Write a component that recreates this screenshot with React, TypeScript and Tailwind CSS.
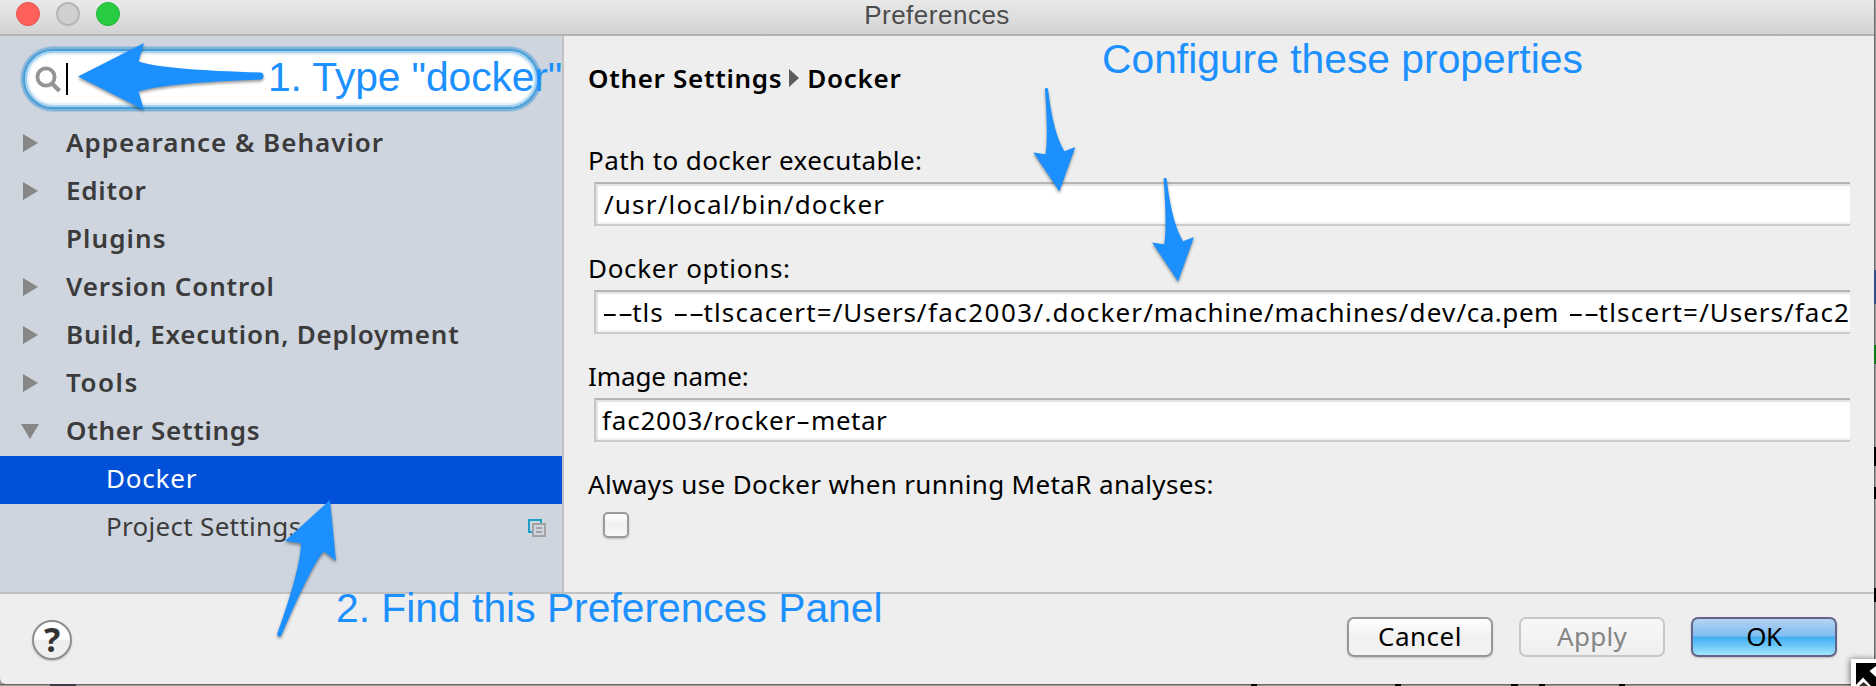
import React from "react";

const treeItems = [
  { label: "Appearance & Behavior", arrow: "right", track: "tracking-[1px]" },
  { label: "Editor", arrow: "right", track: "tracking-[0.75px]" },
  { label: "Plugins", arrow: "none", track: "tracking-[1.1px]" },
  { label: "Version Control", arrow: "right", track: "tracking-[0.86px]" },
  { label: "Build, Execution, Deployment", arrow: "right", track: "tracking-[0.78px]" },
  { label: "Tools", arrow: "right", track: "tracking-[1.5px]" },
  { label: "Other Settings", arrow: "down", track: "tracking-[0.7px]" },
];

function Disclosure({ kind }: { kind: string }) {
  return (
    <svg className="mb-0.5 h-6 w-[46px] shrink-0" viewBox="0 0 46 24" fill="#868686">
      {kind === "right" && <path d="M3 3 L18 12 L3 21 Z" />}
      {kind === "down" && <path d="M1 5 H19 L10 20 Z" />}
    </svg>
  );
}

function Sidebar() {
  return (
    <aside className="w-[564px] shrink-0 border-r-2 border-[#c1c1c1] bg-[#ced5de] text-[#3b3b3b]">
      <div className="flex h-[84px] items-start pl-[23px] pt-[13px]">
        <div className="flex h-[60px] w-[516px] items-center rounded-full border-2 border-[#479fda] bg-white pl-2.5 shadow-[0_0_0_2px_#80b2d9,0_0_0_3px_#a9c5dd,inset_0_0_0_2px_#a5d0ee,inset_0_0_1px_4px_#e4f1fa]">
          <svg className="h-7 w-7" viewBox="0 0 28 28" fill="none" stroke="#949494">
            <circle cx="11" cy="12" r="8.6" strokeWidth="3.8" />
            <path d="M17 18.5 L24.5 26" strokeWidth="4.4" />
          </svg>
          <span className="ml-[3px] h-8 w-0.5 bg-black" />
        </div>
      </div>
      {treeItems.map((item) => (
        <div key={item.label} className="flex h-12 items-center pl-5">
          <Disclosure kind={item.arrow} />
          <span className={`pb-1 font-semibold ${item.track}`}>{item.label}</span>
        </div>
      ))}
      <div className="flex h-12 items-center bg-[#0350d8] pb-1 pl-[106px] tracking-[0.8px] text-white">
        Docker
      </div>
      <div className="flex h-12 items-center justify-between pl-[106px] pr-4">
        <span className="pb-1 tracking-[0.3px]">Project Settings</span>
        <svg className="mb-px h-[18px] w-[18px]" viewBox="0 0 18 18" fill="none" strokeWidth="2">
          <path d="M4 13 H1 V1 H13 V4" stroke="#1f9fc6" />
          <rect x="5" y="5" width="12" height="12" stroke="#a3a3a3" />
          <path d="M8 9 H14 M8 13 H14" stroke="#a3a3a3" />
        </svg>
      </div>
    </aside>
  );
}

function Dashes() {
  return (
    <span className="inline-block w-[31px]">
      <span className="inline-block origin-left scale-x-[1.87]">--</span>
    </span>
  );
}

function Field({ label, labelTrack, children }: { label: string; labelTrack: string; children: React.ReactNode }) {
  return (
    <div className="h-[108px]">
      <div className={`h-9 leading-9 ${labelTrack}`}>{label}</div>
      <div className="ml-1.5 mr-6 mt-1 flex h-11 items-center overflow-hidden whitespace-pre border-y-2 border-l-2 border-b-[#cbcbcb] border-l-[#c6c6c6] border-t-[#b5b5b5] bg-white pl-1.5 shadow-[inset_2px_2px_1px_#e4e4e4,inset_0_-2px_1px_#f3f3f3]">
        {children}
      </div>
    </div>
  );
}

function DockerPanel() {
  return (
    <main className="min-w-0 flex-1 pl-6 pt-6 text-black">
      <div className="mb-[46px] flex h-9 items-center font-semibold">
        <span className="tracking-[0.7px]">Other Settings</span>
        <svg className="ml-[7px] mr-2 h-5 w-2.5" viewBox="0 0 10 20" fill="#5c5c5c">
          <path d="M0 1 L10 10 L0 19 Z" />
        </svg>
        <span className="tracking-[0.7px]">Docker</span>
      </div>
      <Field label="Path to docker executable:" labelTrack="tracking-[0.42px]">
        <span className="ml-0.5 tracking-[1.18px]">/usr/local/bin/docker</span>
      </Field>
      <Field label="Docker options:" labelTrack="tracking-[0.7px]">
        <Dashes />
        <span className="tracking-[0.9px]">tls </span>
        <span className="w-0.5" />
        <Dashes />
        <span className="tracking-[1.15px]">tlscacert=</span>
        <span className="tracking-[0.85px]">/Users</span>
        <span className="tracking-[1.45px]">/fac2003</span>
        <span className="tracking-[1.2px]">/.docker</span>
        <span className="tracking-[0.77px]">/machine</span>
        <span className="tracking-[0.84px]">/machines</span>
        <span className="tracking-[1.2px]">/dev</span>
        <span className="tracking-[0.55px]">/ca.pem </span>
        <span className="w-0.5" />
        <Dashes />
        <span className="tracking-[1.25px]">tlscert=</span>
        <span className="tracking-[0.95px]">/Users</span>
        <span className="tracking-[1.1px]">/fac2</span>
      </Field>
      <Field label="Image name:" labelTrack="tracking-[-0.1px]">
        <span className="tracking-[0.8px]">fac2003/rocker</span>
        <span className="inline-block w-[15px]">
          <span className="inline-block origin-left scale-x-[1.7]">-</span>
        </span>
        <span className="tracking-[0.5px]">metar</span>
      </Field>
      <div className="h-9 leading-9 tracking-[0.36px]">Always use Docker when running MetaR analyses:</div>
      <div className="ml-[15px] mt-2.5 h-[26px] w-[26px] rounded-[5px] border-2 border-[#9b9b9b] bg-linear-to-b from-white via-[#f0f0f0] to-[#f8f8f8] shadow-[0_1px_2px_#bdbdbd]" />
    </main>
  );
}

function Footer() {
  return (
    <footer className="flex h-[92px] items-start border-t-2 border-[#c1c1c1] pl-8 pr-[37px]">
      <div className="mt-[26px] flex h-10 w-10 items-center justify-center rounded-full border-2 border-[#8d8d8d] bg-linear-to-b from-white from-50% to-[#efefef] to-50% pb-0.5 text-[34px] font-bold text-[#333] shadow-[0_1px_2px_#bbb]">
        ?
      </div>
      <div className="ml-auto mt-[23px] flex gap-[26px]">
        <div className="flex h-10 w-[146px] items-center justify-center rounded-[7px] border-2 border-[#979797] bg-linear-to-b from-white via-[#f1f1f1] to-[#f3f3f3] pb-0.5 tracking-[0.5px] text-black shadow-[0_1px_2px_#c4c4c4]">
          Cancel
        </div>
        <div className="flex h-10 w-[146px] items-center justify-center rounded-[7px] border-2 border-[#c7c7c7] bg-linear-to-b from-[#f7f7f7] to-[#efefef] pb-0.5 tracking-[0.3px] text-[#858585]">
          Apply
        </div>
        <div className="flex h-10 w-[146px] items-center justify-center rounded-[7px] border-2 border-[#62648c] bg-[linear-gradient(to_bottom,#b4d2f3_0%,#7fbdf0_48%,#3fadf2_50%,#68c4f8_72%,#a5e6fb_100%)] pb-0.5 tracking-[-0.4px] text-black shadow-[0_1px_2px_#bbb]">
          OK
        </div>
      </div>
    </footer>
  );
}

const downArrow =
  "M1045 89 Q1046 86.5 1048 89 Q1053 133 1064.4 151.2 L1075.3 147 L1059.4 191.5 L1033.4 152.5 L1045.5 154.3 Q1048.5 138 1045 89 Z";

function Annotations() {
  return (
    <div className="pointer-events-none absolute inset-0 whitespace-nowrap font-['Liberation_Sans',sans-serif] text-[40.8px] leading-10 text-[#1c90ff]">
      <svg className="absolute inset-0 h-full w-full drop-shadow-[0_2px_1.5px_rgba(0,0,0,0.4)]" viewBox="0 0 1876 686" fill="#1c90ff">
        <path d="M78 76.5 L144 43 L138.5 61.5 Q165 70 261 72.5 Q263.5 73 263.5 76 Q263.5 79 261 79.5 Q165 83 138.5 91.5 L144 110 Z" />
        <path d="M330 500 L336 561 L324 551.5 Q313 562 281.5 635 Q279.5 638.5 277 634.5 Q301 567 301 543.5 L285 541 Z" />
        <path d={downArrow} />
        <path d={downArrow} transform="translate(118.7 90)" />
      </svg>
      <span className="absolute left-[268px] top-[57px] tracking-[-0.1px]">1. Type "docker"</span>
      <span className="absolute left-[336px] top-[588px]">2. Find this Preferences Panel</span>
      <span className="absolute left-[1102px] top-[39px]">Configure these properties</span>
    </div>
  );
}

function Backdrop() {
  return (
    <svg className="absolute inset-0 h-full w-full" viewBox="0 0 1876 686">
      <rect width="1876" height="686" fill="#9a9a9a" />
      <path d="M1874 0 H1875 V684 H0 V685 H1874 Z" fill="#6b6b6b" />
      <rect x="1874" y="270" width="2" height="34" fill="#2f5080" />
      <rect x="1874" y="345" width="2" height="19" fill="#0d7a1a" />
      <path d="M1874 447 h2 v19 h-2 Z M1874 487 h2 v12 h-2 Z M1874 588 h2 v14 h-2 Z" fill="#000" />
      <rect x="50" y="684" width="26" height="2" fill="#3e3e46" />
      <path d="M1251 684 h6 v2 h-6 Z M1395 684 h6 v2 h-6 Z M1511 684 h7 v2 h-7 Z M1539 684 h6 v2 h-6 Z M1619 684 h6 v2 h-6 Z" fill="#000" />
    </svg>
  );
}

function ResizeCursor() {
  return (
    <svg className="absolute bottom-0 right-0 h-[27px] w-[25px] drop-shadow-[-1px_0_3px_rgba(0,0,0,0.5)]" viewBox="0 0 25 27">
      <rect width="25" height="27" fill="#fff" />
      <path d="M5 4 H25 V7 L18.5 12 L25 18 V27 H20 L12 18.5 L5 26 Z" fill="#000" />
      <path d="M8 27 L12.5 23 L17 27 Z" fill="#333" />
    </svg>
  );
}

export default function App() {
  return (
    <div className="relative h-[686px] w-[1876px] overflow-hidden font-['Noto_Sans',sans-serif] text-[26px]">
      <Backdrop />
      <div className="relative flex h-[684px] w-[1874px] flex-col overflow-hidden rounded-bl-[6px] bg-[#eeeeee]">
        <header className="relative h-9 shrink-0 border-b-2 border-[#b3b3b3] bg-linear-to-b from-[#e9e9e9] to-[#d3d3d3]">
          <div className="flex gap-4 pl-4 pt-0.5">
            <span className="h-6 w-6 rounded-full border border-[#e8504a] bg-[#ff605a]" />
            <span className="h-6 w-6 rounded-full border-2 border-[#b5b5b5] bg-[#d0d0d0]" />
            <span className="h-6 w-6 rounded-full border border-[#1fb534] bg-[#29cc41]" />
          </div>
          <h1 className="absolute inset-x-0 top-0 text-center font-['Liberation_Sans',sans-serif] text-[26px] leading-[30px] tracking-[0.5px] text-[#4c4c4c]">
            Preferences
          </h1>
        </header>
        <div className="flex min-h-0 flex-1">
          <Sidebar />
          <DockerPanel />
        </div>
        <Footer />
      </div>
      <Annotations />
      <ResizeCursor />
    </div>
  );
}
